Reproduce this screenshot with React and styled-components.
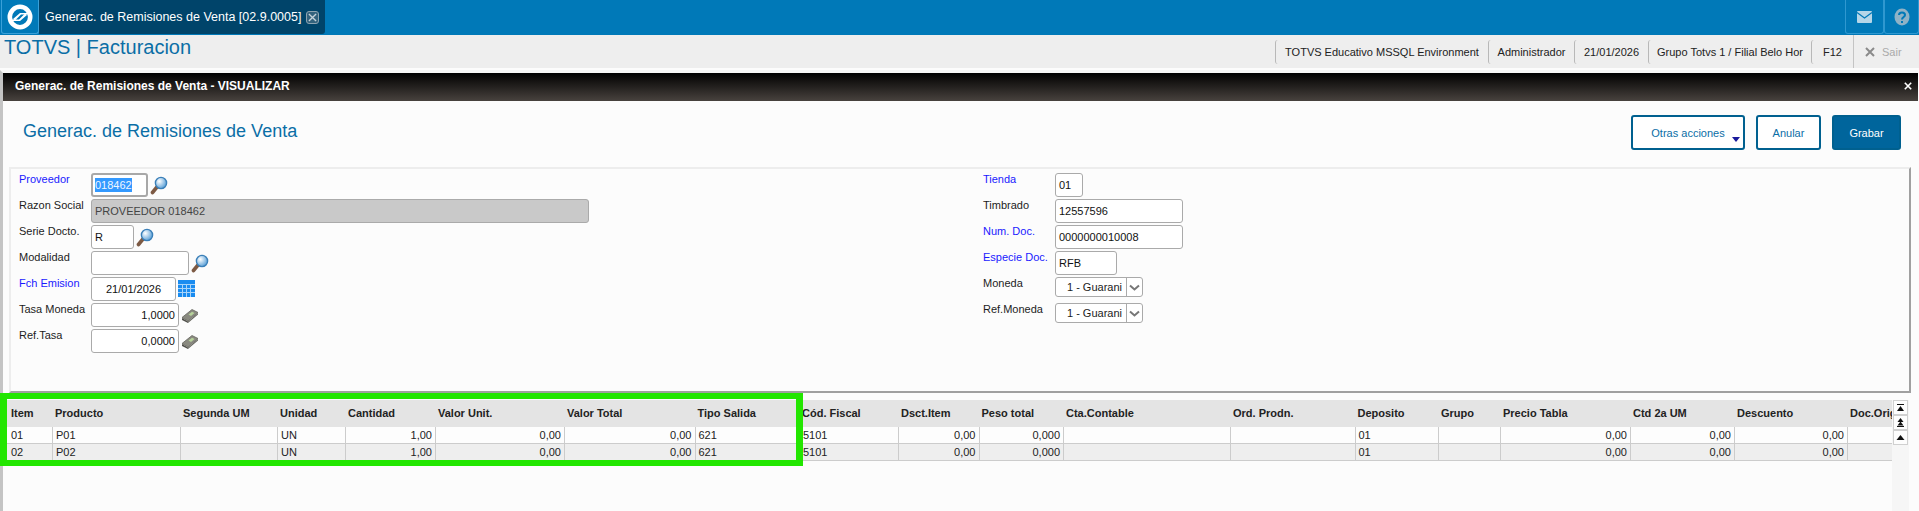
import React from "react";
import styled, { createGlobalStyle } from "styled-components";

const Global = createGlobalStyle`
  html, body { margin: 0; padding: 0; height: 511px; overflow: hidden; background: #fcfcfc; }
  body { font-family: "Liberation Sans", Arial, sans-serif; font-size: 11px; color: #1c1c1c; }
  * { box-sizing: border-box; }
`;

const Page = styled.div`position: relative; width: 1919px; height: 511px; overflow: hidden; display: flex; flex-direction: column;`;
const TopBar = styled.div`height: 35px; background: #0079b8; display: flex; align-items: stretch; flex: none;`;
const LogoTile = styled.div`
  width: 38px; height: 34px; margin-left: 1px; background: #0079b8; border: 1px solid #3aa0d8; border-top: 0; border-radius: 0 0 3px 3px;
  display: flex; align-items: center; justify-content: center;
`;
const Tab = styled.div`
  width: 286px; height: 34px; background: #00446a; color: #fff; font-size: 12.5px; display: flex; align-items: center; padding-left: 6px; gap: 5px; border-radius: 0 0 3px 0;
  white-space: nowrap;
`;
const TabClose = styled.span`
  width: 13px; height: 13px; border: 1px solid #8ca3b1; border-radius: 3px; background: #33627d; display: flex; align-items: center; justify-content: center;
`;
const TopIcons = styled.div`margin-left: auto; display: flex;`;
const TopTile = styled.div`
  width: ${p => p.$w}px; height: 34px; border: 1px solid #2f98d0; border-top: 0; border-radius: 0 0 3px 3px; display: flex; align-items: center; justify-content: center;
`;
const SubBar = styled.div`height: 33px; background: #eeeeee; display: flex; align-items: center; flex: none; padding-left: 4px;`;
const AppTitle = styled.div`font-size: 20px; color: #0b6ea6; position: relative; top: -4px;`;
const Status = styled.div`margin-left: auto; display: flex; height: 100%; align-items: center;`;
const StatusItem = styled.div`
  width: ${p => p.$w}px; height: 24px; display: flex; align-items: center; justify-content: center; border-left: 1px solid #b8b8b8; border-radius: 3px 0 0 3px;
  font-size: 11px; color: #222; white-space: nowrap;
`;
const Exit = styled.div`width: 66px; height: 33px; display: flex; align-items: center; gap: 7px; padding-left: 11px; border-left: 1px solid #c4c4c4; color: #aaa; font-size: 11px;`;
const Modal = styled.div`flex: 1; margin-top: 2px; margin-right: 1px; border-left: 3px solid #c4c4c4; border-top: 3px solid #f6f6f6; display: flex; flex-direction: column; background: #fcfcfc; min-height: 0;`;
const ModalHeader = styled.div`
  height: 28px; flex: none; background: linear-gradient(#000000, #48423e); color: #fff; font-weight: bold; font-size: 12px; display: flex; align-items: center; justify-content: space-between; padding: 0 6px 2px 12px;
`;
const TitleRow = styled.div`height: 66px; flex: none; display: flex; align-items: flex-start; padding: 14px 17px 0 20px;`;
const PageTitle = styled.h1`margin: 6px 0 0; font-size: 18px; font-weight: normal; color: #0b6ea6;`;
const Actions = styled.div`margin-left: auto; display: flex; gap: 11px;`;
const ActionButton = styled.button`
  position: relative; width: ${p => p.$w}px; height: 35px; border: 2px solid #00608f; border-radius: 3px; font: 11px "Liberation Sans", Arial, sans-serif;
  background: ${p => (p.$primary ? "#00659c" : "#fff")}; color: ${p => (p.$primary ? "#fff" : "#0b6ea6")}; padding: 0;
`;
const Caret = styled.span`
  position: absolute; right: 3px; bottom: 6px; width: 0; height: 0; border-left: 4px solid transparent; border-right: 4px solid transparent; border-top: 5px solid #1a1a9c;
`;
const FormBox = styled.div`
  height: 226px; flex: none; margin: 0 7px 0 6px; border: 2px solid #ededed; border-right-color: #a0a0a0; border-bottom-color: #a0a0a0;
  padding: 4px 0 0 8px; display: flex;
`;
const FormColumn = styled.div`display: flex; flex-direction: column; gap: 2px; width: ${p => p.$w}px; flex: none;`;
const FormRow = styled.div`display: flex; align-items: flex-start; height: 24px;`;
const FieldLabel = styled.div`
  width: ${p => p.$w}px; flex: none; font-size: 11px; line-height: 12px; color: ${p => (p.$required ? "#1a1aff" : "#1c1c1c")}; white-space: nowrap;
`;
const Field = styled.div`
  width: ${p => p.$w}px; height: 24px; flex: none; border: 1px solid #aaaaaa; border-radius: 3px; background: ${p => (p.$disabled ? "#c9c9c9" : "#fff")};
  color: ${p => (p.$disabled ? "#444" : "#111")}; font-size: 11px; line-height: 22px; padding: 0 3px; text-align: ${p => p.$align || "left"}; white-space: nowrap;
  ${p => p.$focus && "border: 2px solid #a8a8a8; line-height: 20px; padding: 0 2px;"}
`;
const Selected = styled.span`background: #3399ff; color: #eef6ff; padding: 1px 0;`;
const SelectBox = styled.div`
  width: 88px; height: 20px; flex: none; border: 1px solid #aaa; border-radius: 3px; background: #fff; display: flex; font-size: 11px; line-height: 18px;
`;
const SelectValue = styled.div`width: 71px; text-align: right; padding-right: 4px; border-right: 1px solid #aaa;`;
const SelectArrow = styled.div`flex: 1; display: flex; align-items: center; justify-content: center;`;
const FieldIcon = styled.span`margin-left: 2px; margin-top: ${p => p.$top || 3}px; display: block; line-height: 0;`;
const GridArea = styled.div`flex: 1; display: flex; margin: 7px 7px 0 4px; min-height: 0;`;
const GridScroll = styled.div`width: 1885px; overflow: hidden; flex: none;`;
const GridRow = styled.div`
  display: grid; grid-template-columns: ${p => p.$cols}; height: ${p => p.$h}px;
  background: ${p => p.$bg}; ${p => p.$line && "border-bottom: 1px solid #cccccc;"}
`;
const HeadCell = styled.div`
  font-weight: bold; font-size: 11px; line-height: 27px; padding-left: ${p => (p.$first ? 4 : 3)}px; color: #222; white-space: nowrap; overflow: hidden;
`;
const Cell = styled.div`
  font-size: 11px; line-height: 16px; padding: 0 3px 0 ${p => (p.$first ? 4 : 3)}px; color: #222; white-space: nowrap; overflow: hidden; text-align: ${p => (p.$num ? "right" : "left")}; border-left: ${p => (p.$first ? "0" : "1px solid #cccccc")};
`;
const ScrollBar = styled.div`width: 17px; flex: none; background: #f6f6f6; display: flex; flex-direction: column; align-items: center;`;
const ScrollButton = styled.div`width: 15px; height: 15px; border: 1px solid #d0d0d0; background: #fdfdfd; display: flex; align-items: center; justify-content: center; line-height: 0;`;
const Highlight = styled.div`position: absolute; left: 0; top: 393px; width: 803px; height: 73px; border: solid #22e600; border-width: 6px 7px; pointer-events: none;`;

const Logo = () => (
  <svg width="26" height="26" viewBox="0 0 26 26">
    <circle cx="13" cy="13" r="10.2" fill="none" stroke="#fff" strokeWidth="4.6" />
    <path d="M6 15 L13 9 H21 V10.500 H14 L8 16.500 Z" fill="#fff" />
    <path d="M20 11 L13 17 H5 V15.500 H12 L18 9.500 Z" fill="#fff" />
  </svg>
);
const Magnifier = () => (
  <svg width="18" height="19" viewBox="0 0 18 19">
    <defs>
      <radialGradient id="lens" cx="0.35" cy="0.35" r="0.8"><stop offset="0" stopColor="#fff" /><stop offset="1" stopColor="#3d8fd0" /></radialGradient>
    </defs>
    <path d="M7 11 L2.500 16.500" stroke="#7d5a44" strokeWidth="3.6" strokeLinecap="round" />
    <circle cx="11" cy="7" r="5.6" fill="url(#lens)" stroke="#3a7fb8" strokeWidth="1.4" />
  </svg>
);
const Calendar = () => (
  <svg width="17" height="17" viewBox="0 0 17 17">
    <rect width="17" height="17" fill="#1a8cf0" />
    <path d="M0 4.5H17M0 8.500H17M0 12.500H17M4.500 4V17M8.500 4V17M12.500 4V17" stroke="#a8d4fa" strokeWidth="1" />
  </svg>
);
const Calculator = () => (
  <svg width="18" height="15" viewBox="0 0 18 15">
    <path d="M1 9.500 L11 1.500 L17 4.500 L7 13 Z" fill="#8a8a80" stroke="#66665e" strokeWidth="0.8" />
    <path d="M1 10 L7 13.500 L7 15 L1 12 Z" fill="#4f4f48" />
    <path d="M7.500 6.500 L11 3.800 L13.500 5 L10 8 Z" fill="#b6d29a" />
    <path d="M7 13.500 L17 5 L17 6.500 L7 15 Z" fill="#66665e" />
  </svg>
);
const Chevron = () => (
  <svg width="11" height="7" viewBox="0 0 11 7"><path d="M1 1.500 L5.500 5.500 L10 1.500" fill="none" stroke="#777" strokeWidth="2" /></svg>
);
const Mail = () => (
  <svg width="15" height="12" viewBox="0 0 15 12">
    <rect width="15" height="12" rx="1" fill="#b5d6e8" />
    <path d="M0 1.500 L7.500 7 L15 1.500" fill="none" stroke="#0079b8" strokeWidth="1.200" />
  </svg>
);
const Help = () => (
  <svg width="16" height="18" viewBox="0 0 16 18">
    <ellipse cx="8" cy="9" rx="7.500" ry="8.500" fill="#8fb2c6" />
    <path d="M5 7 C5 3.500 11 3.500 11 7 C11 9 8 9 8 11.500" fill="none" stroke="#0079b8" strokeWidth="2" />
    <rect x="7" y="13" width="2" height="2" fill="#0079b8" />
  </svg>
);
const Cross = ({ size, color, width }) => (
  <svg width={size} height={size} viewBox="0 0 10 10"><path d="M1 1 L9 9 M9 1 L1 9" stroke={color} strokeWidth={width} /></svg>
);
const ScrollGlyph = ({ kind }) => (
  <svg width="9" height="9" viewBox="0 0 9 9">
    {kind === "top" && <path d="M1 1H8V2H1Z M4.500 3 L8 8 H1 Z" fill="#111" />}
    {kind === "page" && <path d="M4.500 0 L7.500 4 H1.500 Z M4.500 3.500 L7.500 7.500 H1.500 Z M1 8H8V9H1Z" fill="#111" />}
    {kind === "up" && <path d="M4.500 2 L8.500 7 H0.500 Z" fill="#111" />}
  </svg>
);

const cols = "45px 128px 97px 68px 90px 129px 130.500px 104.500px 99px 80.500px 84.500px 167px 124.500px 83.500px 62px 130px 104px 113px 100px";
const heads = ["Item","Producto","Segunda UM","Unidad","Cantidad","Valor Unit.","Valor Total","Tipo Salida","Cód. Fiscal","Dsct.Item","Peso total","Cta.Contable","Ord. Prodn.","Deposito","Grupo","Precio Tabla","Ctd 2a UM","Descuento","Doc.Orig."];
const row = (i, p) => [
  [i],[p],[""],["UN"],["1,00",1],["0,00",1],["0,00",1],["621"],["5101"],["0,00",1],["0,000",1],[""],[""],["01"],[""],["0,00",1],["0,00",1],["0,00",1],[""],
];

const left = [
  { l: "Proveedor", r: 1, w: 57, v: <Selected>018462</Selected>, focus: 1, icon: <Magnifier /> },
  { l: "Razon Social", w: 498, v: "PROVEEDOR 018462", dis: 1 },
  { l: "Serie Docto.", w: 43, v: "R", icon: <Magnifier /> },
  { l: "Modalidad", w: 98, v: "", icon: <Magnifier /> },
  { l: "Fch Emision", r: 1, w: 85, v: "21/01/2026", center: 1, icon: <Calendar />, top: 3 },
  { l: "Tasa Moneda", w: 88, v: "1,0000", num: 1, icon: <Calculator />, top: 5 },
  { l: "Ref.Tasa", w: 88, v: "0,0000", num: 1, icon: <Calculator />, top: 5 },
];
const right = [
  { l: "Tienda", r: 1, w: 28, v: "01" },
  { l: "Timbrado", w: 128, v: "12557596" },
  { l: "Num. Doc.", r: 1, w: 128, v: "0000000010008" },
  { l: "Especie Doc.", r: 1, w: 62, v: "RFB" },
  { l: "Moneda", sel: 1, v: "1 - Guarani" },
  { l: "Ref.Moneda", sel: 1, v: "1 - Guarani" },
];

export default function App() {
  return (
    <Page>
      <Global />
      <TopBar>
        <LogoTile><Logo /></LogoTile>
        <Tab>Generac. de Remisiones de Venta [02.9.0005]<TabClose><Cross size={9} color="#c4d2da" width={1.5} /></TabClose></Tab>
        <TopIcons>
          <TopTile $w={39}><Mail /></TopTile>
          <TopTile $w={35}><Help /></TopTile>
        </TopIcons>
      </TopBar>
      <SubBar>
        <AppTitle>TOTVS | Facturacion</AppTitle>
        <Status>
          <StatusItem $w={213}>TOTVS Educativo MSSQL Environment</StatusItem>
          <StatusItem $w={86}>Administrador</StatusItem>
          <StatusItem $w={74}>21/01/2026</StatusItem>
          <StatusItem $w={163}>Grupo Totvs 1 / Filial Belo Hor</StatusItem>
          <StatusItem $w={42}>F12</StatusItem>
          <Exit><Cross size={10} color="#8a8a8a" width={2} />Sair</Exit>
        </Status>
      </SubBar>
      <Modal>
        <ModalHeader>Generac. de Remisiones de Venta - VISUALIZAR<Cross size={8} color="#fff" width={2} /></ModalHeader>
        <TitleRow>
          <PageTitle>Generac. de Remisiones de Venta</PageTitle>
          <Actions>
            <ActionButton $w={114}>Otras acciones<Caret /></ActionButton>
            <ActionButton $w={65}>Anular</ActionButton>
            <ActionButton $w={69} $primary>Grabar</ActionButton>
          </Actions>
        </TitleRow>
        <FormBox>
          <FormColumn $w={964}>
            {left.map(f => (
              <FormRow key={f.l}>
                <FieldLabel $w={72} $required={f.r}>{f.l}</FieldLabel>
                <Field $w={f.w} $focus={f.focus} $disabled={f.dis} $align={f.num ? "right" : f.center ? "center" : "left"}>{f.v}</Field>
                {f.icon && <FieldIcon $top={f.top}>{f.icon}</FieldIcon>}
              </FormRow>
            ))}
          </FormColumn>
          <FormColumn $w={300}>
            {right.map(f => (
              <FormRow key={f.l}>
                <FieldLabel $w={72} $required={f.r}>{f.l}</FieldLabel>
                {f.sel ? (
                  <SelectBox><SelectValue>{f.v}</SelectValue><SelectArrow><Chevron /></SelectArrow></SelectBox>
                ) : (
                  <Field $w={f.w}>{f.v}</Field>
                )}
              </FormRow>
            ))}
          </FormColumn>
        </FormBox>
        <GridArea>
          <GridScroll>
            <GridRow $cols={cols} $h={27} $bg="#e4e4e4">
              {heads.map((h, k) => <HeadCell key={h} $first={k===0}>{h}</HeadCell>)}
            </GridRow>
            {[["01","P01","#fdfdfd"],["02","P02","#eeeeee"]].map(([i,p,bg]) => (
              <GridRow key={i} $cols={cols} $h={17} $bg={bg} $line>
                {row(i,p).map(([v,n],k) => <Cell key={k} $num={n} $first={k===0}>{v}</Cell>)}
              </GridRow>
            ))}
          </GridScroll>
          <ScrollBar>
            <ScrollButton><ScrollGlyph kind="top" /></ScrollButton>
            <ScrollButton><ScrollGlyph kind="page" /></ScrollButton>
            <ScrollButton><ScrollGlyph kind="up" /></ScrollButton>
          </ScrollBar>
        </GridArea>
      </Modal>
      <Highlight />
    </Page>
  );
}
